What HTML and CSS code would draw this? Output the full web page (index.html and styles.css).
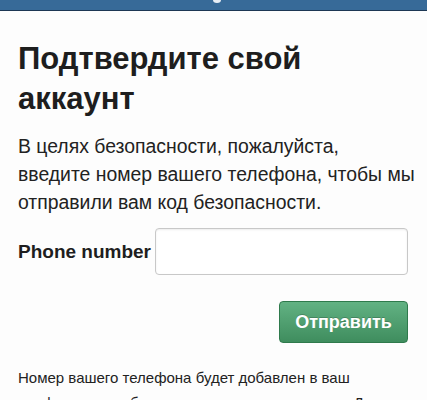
FILE: index.html
```html
<!DOCTYPE html>
<html lang="ru">
<head>
<meta charset="utf-8">
<title>Подтвердите свой аккаунт</title>
<link rel="stylesheet" href="styles.css">
</head>
<body>
<header class="topbar">
  <span class="topbar-logo"></span>
</header>
<main class="content">
  <h1 class="title">Подтвердите свой аккаунт</h1>
  <p class="lead">В целях безопасности, пожалуйста,<br> введите номер вашего телефона, чтобы мы отправили вам код безопасности.</p>
  <form class="phone-form">
    <div class="field">
      <label class="field-label" for="phone">Phone number</label>
      <input class="field-input" id="phone" type="tel">
    </div>
    <div class="actions">
      <button class="btn-submit" type="button">Отправить</button>
    </div>
  </form>
  <p class="note">Номер вашего телефона будет добавлен в ваш профиль, но не будет виден никому, кроме вас. Для</p>
</main>
</body>
</html>
```
FILE: styles.css
```css
* { box-sizing: border-box; }

html, body {
  margin: 0;
  padding: 0;
  background: #fdfdfd;
  color: #1f1f1f;
  font-family: "Liberation Sans", Arial, sans-serif;
}

body {
  height: 400px;
  overflow: hidden;
}

.topbar {
  height: 11px;
  background: #376a98;
  border-bottom: 1px solid #1d3754;
  display: flex;
  justify-content: center;
  overflow: hidden;
}

.topbar-logo {
  width: 8px;
  height: 6px;
  margin-top: -3px;
  margin-left: 6px;
  border-radius: 50%;
  background: #e8eef5;
}

.content {
  padding: 28px 19px 0 18px;
}

.title {
  margin: 0;
  font-size: 31px;
  line-height: 40px;
  font-weight: bold;
  color: #1e1e1e;
}

.lead {
  margin: 13px -19px 0 0;
  font-size: 19.4px;
  line-height: 28px;
  color: #222;
}

.phone-form {
  margin-top: 12px;
}

.field {
  display: flex;
  align-items: center;
  gap: 4px;
}

.field-label {
  font-size: 19px;
  font-weight: bold;
  color: #1e1e1e;
  white-space: nowrap;
}

.field-input {
  flex: 1;
  height: 47px;
  border: 1px solid #c8c8c8;
  border-radius: 4px;
  background: #fff;
  box-shadow: inset 0 1px 2px rgba(0, 0, 0, 0.08);
}

.actions {
  display: flex;
  justify-content: flex-end;
  margin-top: 26px;
}

.btn-submit {
  width: 129px;
  height: 42px;
  border: 1px solid #2f7a4c;
  border-radius: 4px;
  background: linear-gradient(#62b283, #3f8d5e);
  color: #fff;
  font-family: inherit;
  font-size: 18px;
  font-weight: bold;
  text-shadow: 0 -1px 0 rgba(0, 0, 0, 0.2);
}

.note {
  margin: 22px 0 0;
  font-size: 15px;
  line-height: 25px;
  color: #222;
}
```
